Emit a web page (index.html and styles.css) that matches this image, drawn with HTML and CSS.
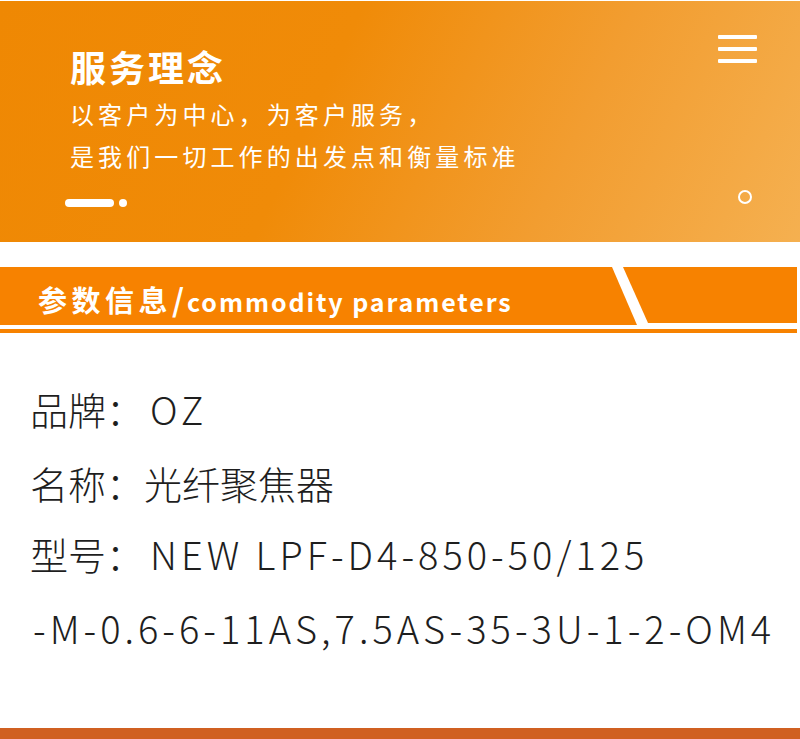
FILE: index.html
```html
<!DOCTYPE html>
<html lang="zh-CN">
<head>
<meta charset="utf-8">
<title>服务理念</title>
<link rel="stylesheet" href="styles.css">
</head>
<body>
<header class="banner">
  <div class="banner-text">
    <h1 class="banner-title">服务理念</h1>
    <p class="banner-sub">以客户为中心，为客户服务，<br>是我们一切工作的出发点和衡量标准</p>
    <div class="dots"><span class="pill"></span><span class="dot"></span></div>
  </div>
  <div class="banner-side">
    <div class="menu"><span></span><span></span><span></span></div>
    <span class="ring"></span>
  </div>
</header>

<section class="params">
  <div class="param-bar">
    <div class="param-left"><h2 class="param-title">参数信息<span class="slash">/</span><span class="en">commodity parameters</span></h2></div>
    <div class="param-right"></div>
  </div>
  <div class="param-line"></div>
</section>

<main class="info">
  <p class="row">品牌：<span class="val">OZ</span></p>
  <p class="row">名称：光纤聚焦器</p>
  <p class="row row-model">型号：<span class="val">NEW LPF-D4-850-50/125</span><br><span class="val val-wrap">-M-0.6-6-11AS,7.5AS-35-3U-1-2-OM4</span></p>
</main>

<div class="footer-strip"></div>
</body>
</html>
```

FILE: styles.css
```css
html, body {
  margin: 0;
  padding: 0;
  background: #ffffff;
  overflow: hidden;
}
body {
  font-family: "Noto Sans CJK SC", "Noto Sans", sans-serif;
  color: #222;
}

.banner {
  margin-top: 1px;
  height: 241px;
  box-sizing: border-box;
  display: flex;
  justify-content: space-between;
  padding: 0 43px 0 70px;
  background: linear-gradient(115deg, #ef8803 0%, #f08b08 40%, #f29d30 70%, #f5b050 100%);
  color: #fff;
}
.banner-text {
  padding-top: 44px;
}
.banner-title {
  margin: 0;
  font-size: 36px;
  line-height: 42px;
  font-weight: 700;
  letter-spacing: 3px;
}
.banner-sub {
  margin: 6px 0 0;
  font-size: 24px;
  line-height: 42px;
  letter-spacing: 4.1px;
}
.dots {
  margin-top: 22px;
  display: flex;
  align-items: center;
  gap: 5px;
  margin-left: -5px;
}
.pill {
  width: 49px;
  height: 8px;
  border-radius: 4px;
  background: #fff;
}
.dot {
  width: 8px;
  height: 8px;
  border-radius: 50%;
  background: #fff;
}
.banner-side {
  width: 39px;
  padding-top: 34px;
  display: flex;
  flex-direction: column;
  align-items: flex-start;
}
.menu {
  width: 39px;
  display: flex;
  flex-direction: column;
  gap: 8px;
}
.menu span {
  height: 4px;
  background: #fff;
  border-radius: 1px;
}
.ring {
  margin-top: 127px;
  margin-left: 20px;
  width: 10px;
  height: 10px;
  border: 2.5px solid #fff;
  border-radius: 50%;
}

.params {
  margin-top: 25px;
  width: 797px;
}
.param-bar {
  display: flex;
  height: 58px;
}
.param-left {
  width: 637px;
  height: 58px;
  background: #f78200;
  clip-path: polygon(0 0, 612px 0, 637px 100%, 0 100%);
  display: flex;
  align-items: center;
  padding-left: 38px;
  box-sizing: border-box;
}
.param-right {
  width: 174px;
  margin-left: -14px;
  height: 56px;
  background: #f78200;
  clip-path: polygon(0 0, 100% 0, 100% 100%, 25px 100%);
}
.param-title {
  margin: 4px 0 0;
  color: #fff;
  font-size: 29px;
  font-weight: 700;
  letter-spacing: 4.5px;
  line-height: 1;
  white-space: nowrap;
}
.param-title .slash {
  font-size: 31px;
  letter-spacing: 3px;
}
.param-title .en {
  font-size: 25px;
  letter-spacing: 1.9px;
}
.param-line {
  margin-top: 4px;
  height: 4px;
  background: #f78200;
}

.info {
  margin-top: 39px;
  padding-left: 30px;
}
.row {
  margin: 0;
  font-size: 38px;
  line-height: 74px;
  font-weight: 300;
  color: #1e1e1e;
  white-space: nowrap;
}
.row-model {
  margin-top: -3px;
}
.val {
  letter-spacing: 4px;
  margin-left: 6px;
}
.val-wrap {
  margin-left: 3px;
}

.footer-strip {
  margin-top: 63px;
  height: 11px;
  background: #d06021;
}
```
